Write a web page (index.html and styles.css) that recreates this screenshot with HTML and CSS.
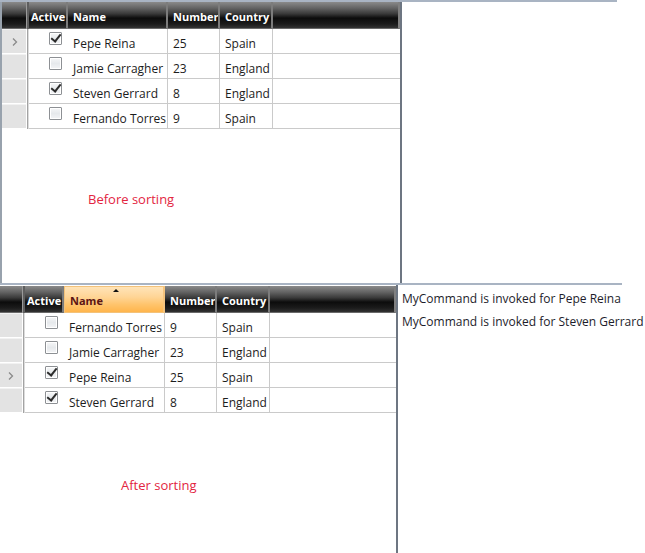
FILE: index.html
```html
<!DOCTYPE html>
<html lang="en">
<head>
    <meta charset="UTF-8">
    <title>Grid sorting</title>
    <link rel="stylesheet" href="styles.css">
</head>
<body>

<div class="window">

  <div class="pane pane-top">
    <div class="grid-host">
      <div class="grid">
        <div class="grid-head">
          <div class="hcell"></div>
          <div class="hsep"></div>
          <div class="hcell hcell-active">Active</div>
          <div class="hcell">Name</div>
          <div class="hcell">Number</div>
          <div class="hcell">Country</div>
          <div class="hcell hcell-fill"></div>
        </div>

        <div class="row">
          <div class="rowhdr"><svg class="current" width="6" height="8" viewBox="0 0 6 8"><path d="M1 0.5 L4.5 4 L1 7.5" fill="none" stroke="#8a8a8a" stroke-width="1.3"/></svg></div>
          <div class="rsep"></div>
          <div class="cell cell-check"><span class="check on"></span></div>
          <div class="cell">Pepe Reina</div>
          <div class="cell">25</div>
          <div class="cell">Spain</div>
          <div class="cell cell-fill"></div>
        </div>
        <div class="row">
          <div class="rowhdr"></div>
          <div class="rsep"></div>
          <div class="cell cell-check"><span class="check"></span></div>
          <div class="cell">Jamie Carragher</div>
          <div class="cell">23</div>
          <div class="cell">England</div>
          <div class="cell cell-fill"></div>
        </div>
        <div class="row">
          <div class="rowhdr"></div>
          <div class="rsep"></div>
          <div class="cell cell-check"><span class="check on"></span></div>
          <div class="cell">Steven Gerrard</div>
          <div class="cell">8</div>
          <div class="cell">England</div>
          <div class="cell cell-fill"></div>
        </div>
        <div class="row">
          <div class="rowhdr"></div>
          <div class="rsep"></div>
          <div class="cell cell-check"><span class="check"></span></div>
          <div class="cell">Fernando Torres</div>
          <div class="cell">9</div>
          <div class="cell">Spain</div>
          <div class="cell cell-fill"></div>
        </div>
      </div>

      <div class="caption caption-before">Before sorting</div>
    </div>
    <div class="side"></div>
  </div>

  <div class="pane pane-bottom">
    <div class="grid-host">
      <div class="grid grid-sorted">
        <div class="grid-head">
          <div class="hcell"></div>
          <div class="hsep"></div>
          <div class="hcell hcell-active">Active</div>
          <div class="hcell hcell-sorted"><span class="sort-arrow"></span>Name</div>
          <div class="hcell">Number</div>
          <div class="hcell">Country</div>
          <div class="hcell hcell-fill"></div>
        </div>

        <div class="row">
          <div class="rowhdr"></div>
          <div class="rsep"></div>
          <div class="cell cell-check"><span class="check"></span></div>
          <div class="cell">Fernando Torres</div>
          <div class="cell">9</div>
          <div class="cell">Spain</div>
          <div class="cell cell-fill"></div>
        </div>
        <div class="row">
          <div class="rowhdr"></div>
          <div class="rsep"></div>
          <div class="cell cell-check"><span class="check"></span></div>
          <div class="cell">Jamie Carragher</div>
          <div class="cell">23</div>
          <div class="cell">England</div>
          <div class="cell cell-fill"></div>
        </div>
        <div class="row">
          <div class="rowhdr"><svg class="current" width="6" height="8" viewBox="0 0 6 8"><path d="M1 0.5 L4.5 4 L1 7.5" fill="none" stroke="#8a8a8a" stroke-width="1.3"/></svg></div>
          <div class="rsep"></div>
          <div class="cell cell-check"><span class="check on"></span></div>
          <div class="cell">Pepe Reina</div>
          <div class="cell">25</div>
          <div class="cell">Spain</div>
          <div class="cell cell-fill"></div>
        </div>
        <div class="row">
          <div class="rowhdr"></div>
          <div class="rsep"></div>
          <div class="cell cell-check"><span class="check on"></span></div>
          <div class="cell">Steven Gerrard</div>
          <div class="cell">8</div>
          <div class="cell">England</div>
          <div class="cell cell-fill"></div>
        </div>
      </div>

      <div class="caption caption-after">After sorting</div>
    </div>

    <div class="log">
      <div class="log-line">MyCommand is invoked for Pepe Reina</div>
      <div class="log-line">MyCommand is invoked for Steven Gerrard</div>
    </div>
  </div>

</div>

</body>
</html>
```

FILE: styles.css
```css
body {
  margin: 0;
  background: #ffffff;
  font-family: "Open Sans", "DejaVu Sans", sans-serif;
  font-size: 12px;
  color: #1c1c1c;
}

.window {
  width: 645px;
  height: 553px;
  overflow: hidden;
}

/* two stacked panes, each with a thin blue-grey rule on top */
.pane {
  display: flex;
  box-sizing: border-box;
  border-top: 2px solid #a9b4c3;
}

.pane-top {
  width: 617px;
  height: 283px;
}

.pane-bottom {
  width: 622px;
  height: 270px;
}

.grid-host {
  width: 402px;
  flex: 0 0 402px;
  box-sizing: border-box;
  border-left: 2px solid #98a2ad;
  border-right: 2px solid #6d7682;
  display: flex;
  flex-direction: column;
}

.pane-bottom .grid-host {
  margin-left: -4px;
  padding-top: 1px;
}

.side {
  flex: 1;
}

/* grid */
.grid-head,
.row {
  display: grid;
  grid-template-columns: 24px 3px 39px 100px 52px 53px 1fr;
}

.grid-sorted .grid-head,
.grid-sorted .row {
  grid-template-columns: 24px 3px 39px 101px 52px 53px 1fr;
}

.grid-head {
  height: 27px;
}

.hcell {
  position: relative;
  box-sizing: border-box;
  background: linear-gradient(to bottom, #8a8a8a 0%, #666666 22%, #3a3a3a 45%, #0c0c0c 62%, #1c1c1c 85%, #333333 100%);
  border-right: 2px solid #7c7c7c;
  border-bottom: 1px solid #6a6a6a;
  color: #ffffff;
  font-weight: bold;
  font-size: 11px;
  line-height: 26px;
  padding: 2px 0 0 5px;
  white-space: nowrap;
  overflow: hidden;
}

.grid-head .hcell:first-child {
  border-right: 0;
}

.hsep {
  background: linear-gradient(to right, #9a9a9a 0 1px, #5e5e5e 1px 3px);
}

.hcell-active {
  padding-left: 2px;
}

.hcell-fill {
  border-right: 2px solid #808080;
}

.hcell-sorted {
  background: linear-gradient(to bottom, #ffe4b8 0%, #ffd596 40%, #ffc46c 70%, #ffb54c 100%);
  border: 1px solid #f3c27a;
  border-right: 2px solid #f5c47e;
  padding-top: 1px;
  color: #5c1414;
}

.sort-arrow {
  position: absolute;
  top: 2px;
  left: 48px;
  width: 0;
  height: 0;
  border-left: 3px solid transparent;
  border-right: 3px solid transparent;
  border-bottom: 3px solid #111111;
}

.row {
  height: 25px;
}

.rowhdr {
  box-sizing: border-box;
  background: #e3e3e3;
  border-bottom: 1px solid #ffffff;
  border-top: 1px solid #f2f2f2;
  display: flex;
  align-items: center;
  justify-content: center;
}

.current {
  display: block;
  margin-left: 2px;
}

.rsep {
  background: linear-gradient(to right, #ffffff 0 1px, #a3a3a3 1px 2px, #dcdcdc 2px 3px);
}

.cell {
  box-sizing: border-box;
  border-bottom: 1px solid #cacaca;
  border-right: 1px solid #cacaca;
  padding: 6px 0 0 5px;
  line-height: 17px;
  white-space: nowrap;
  overflow: hidden;
}

.cell-check {
  border-right: 0;
  padding: 3px 0 0 20px;
}

.cell-fill {
  border-right: 0;
}

.check {
  display: block;
  position: relative;
  width: 13px;
  height: 13px;
  box-sizing: border-box;
  border: 1px solid #8d9094;
  border-radius: 1px;
  background: linear-gradient(to bottom, #f6f7f8 0%, #e6e9ec 50%, #f3f4f6 100%);
  box-shadow: inset 0 0 0 1px #ffffff;
}

.check.on::after {
  content: "";
  position: absolute;
  left: 3px;
  top: -1px;
  width: 4px;
  height: 8px;
  border-right: 2px solid #2b2b2b;
  border-bottom: 2px solid #2b2b2b;
  transform: rotate(38deg);
}

/* captions */
.caption {
  color: #e3253f;
  font-size: 13px;
  line-height: 16px;
}

.caption-before {
  margin: 62px 0 0 86px;
}

.caption-after {
  margin: 64px 0 0 123px;
}

/* invoke log */
.log {
  flex: 1;
  padding: 2px 0 0 4px;
  line-height: 23px;
  white-space: nowrap;
  color: #1d1d2b;
}
```
